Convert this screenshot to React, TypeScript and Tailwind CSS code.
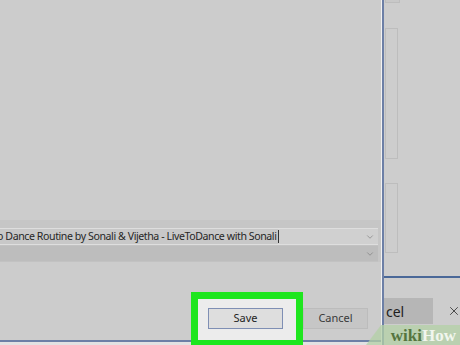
import { ChevronDown, X } from 'lucide-react'

const font = { fontFamily: '"Noto Sans", "Open Sans", Arial, sans-serif' }

function Dropdown({ text, dark }: { text?: string; dark?: boolean }) {
  return (
    <div
      className={`flex h-[17px] w-[378px] shrink-0 items-center overflow-hidden border-y ${
        dark ? 'border-[#c2c2c2] bg-[#bdbdbd]' : 'border-[#dedede] bg-[#d0d0d0]'
      }`}
    >
      <div className="flex h-[15px] flex-1 items-center overflow-hidden whitespace-nowrap">
        {text && (
          <span className="ml-[-3px] bg-[#c8c8c8] pr-[1px] text-[10.6px] leading-[15px] tracking-[-0.42px] text-[#262626]">
            {text}
          </span>
        )}
        {text && <span className="h-[13px] w-px bg-[#333]" />}
      </div>
      <ChevronDown className="mr-[3px] h-[10px] w-[10px] text-[#777]" strokeWidth={1.5} />
    </div>
  )
}

export default function App() {
  return (
    <div className="relative flex h-[345px] w-[460px] overflow-hidden bg-[#cdcdcd]" style={font}>
      {/* save dialog */}
      <div className="flex w-[381px] shrink-0 flex-col bg-[#cccccc]">
        <div className="h-[220px] shrink-0" />
        <div className="flex h-[42px] shrink-0 flex-col bg-[#c6c6c6] pt-[8px]">
          <Dropdown text="o Dance Routine by Sonali & Vijetha - LiveToDance with Sonali" />
          <Dropdown dark />
        </div>
        <div className="flex h-[80px] shrink-0 border-b-2 border-[#6c7fa6] pt-[30px]">
          <div className="ml-[191px] flex">
            <div className="relative z-10 h-[55px] w-[112px] border-[7px] border-[#1ee61e] bg-[#ececec] pl-[10px] pt-[9px]">
              <button className="flex h-[21px] w-[75px] items-center justify-center border border-[#7f8fb4] bg-[#dedede] text-[11px] text-[#1e1e1e]">
                Save
              </button>
            </div>
            <div className="pt-[16px]">
              <button className="flex h-[21px] w-[65px] items-center justify-center border border-[#bcbcbc] bg-[#c6c6c6] text-[11px] text-[#3a3a3a]">
                Cancel
              </button>
            </div>
          </div>
        </div>
        <div className="flex-1 bg-[#e2e2e2]" />
      </div>

      {/* window border */}
      <div className="w-px shrink-0 bg-[#f2f2f2]" />
      <div className="w-[2px] shrink-0 bg-[#6c7fa6]" />

      {/* window behind */}
      <div className="flex flex-1 flex-col">
        <div className="ml-[1px] h-[3px] w-[15px] border-x border-b border-[#bdbdbd] bg-[#c8c8c8]" />
        <div className="ml-[1px] mt-[25px] h-[131px] w-[13px] border border-[#bdbdbd]" />
        <div className="ml-[1px] mt-[24px] h-[70px] w-[13px] border border-[#bdbdbd]" />
        <div className="mt-[23px] h-[2px] bg-[#4a6898]" />
        <div className="flex items-center pt-[20px]">
          <div className="flex h-[26px] w-[49px] items-center bg-[#b6b6b6] pl-[2px] text-[14px] text-[#1e1e1e]">cel</div>
          <X className="ml-[14px] h-[14px] w-[14px] text-[#222]" strokeWidth={1.3} />
        </div>
      </div>

      {/* watermark */}
      <div className="pointer-events-none absolute bottom-0 right-0 flex h-[20px] w-[94px] items-center justify-end pr-[4px] [clip-path:polygon(16%_0,100%_0,100%_100%,0_100%)] bg-[#b3d0a6]/75">
        <span className="text-[17px] font-bold leading-none text-[#55753f]" style={{ fontFamily: '"Liberation Serif", serif' }}>
          wiki
        </span>
        <span className="text-[17px] font-bold leading-none text-[#f1f6ee]" style={{ fontFamily: '"Liberation Serif", serif' }}>
          How
        </span>
      </div>
    </div>
  )
}
